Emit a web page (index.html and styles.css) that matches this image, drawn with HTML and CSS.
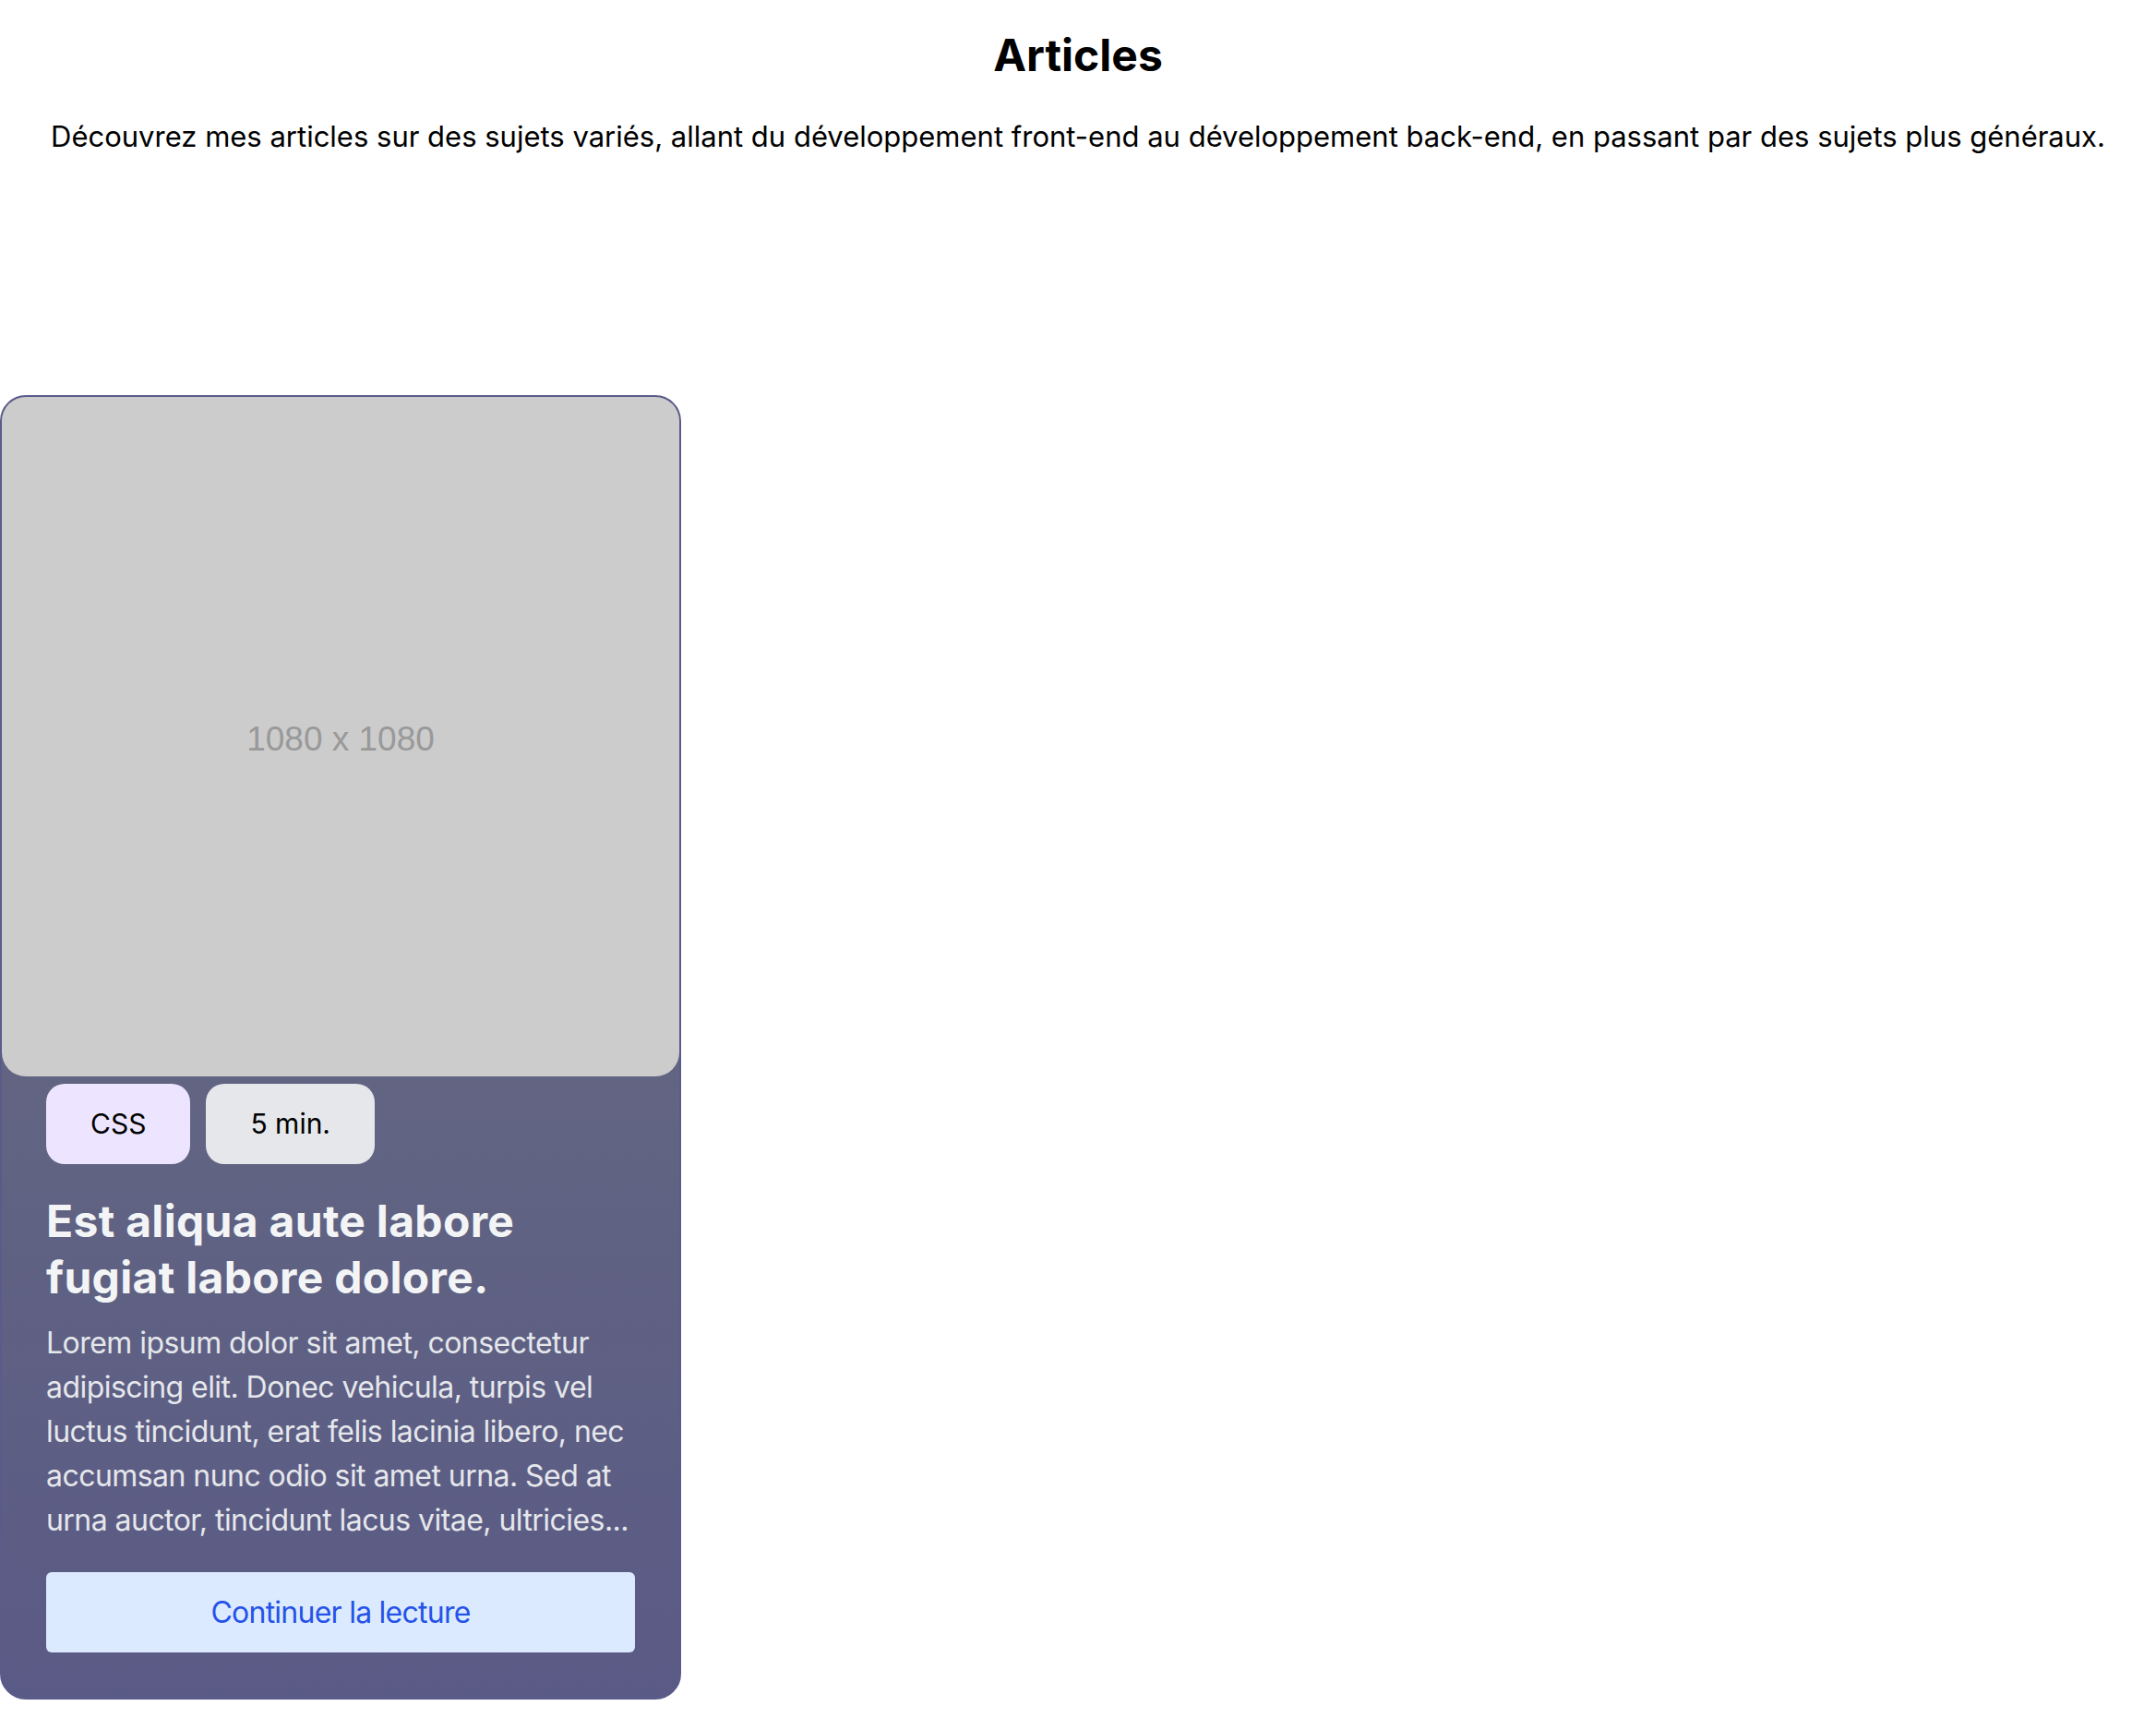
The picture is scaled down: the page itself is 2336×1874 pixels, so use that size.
FILE: index.html
```html
<!DOCTYPE html>
<html lang="fr">
<head>
<meta charset="utf-8">
<title>Articles</title>
<link rel="stylesheet" href="styles.css">
</head>
<body>
<header class="page-header">
  <h1 class="page-title">Articles</h1>
  <p class="page-intro">Découvrez mes articles sur des sujets variés, allant du développement front-end au développement back-end, en passant par des sujets plus généraux.</p>
</header>
<main class="articles">
  <article class="card">
    <div class="card-image"><span class="card-image-label">1080 x 1080</span></div>
    <div class="card-body">
      <div class="tags">
        <span class="tag tag-topic">CSS</span>
        <span class="tag tag-time">5 min.</span>
      </div>
      <h2 class="card-title">Est aliqua aute labore fugiat labore dolore.</h2>
      <p class="card-text">Lorem ipsum dolor sit amet, consectetur adipiscing elit. Donec vehicula, turpis vel luctus tincidunt, erat felis lacinia libero, nec accumsan nunc odio sit amet urna. Sed at urna auctor, tincidunt lacus vitae, ultricies...</p>
      <a class="card-button" href="#">Continuer la lecture</a>
    </div>
  </article>
</main>
</body>
</html>
```

FILE: styles.css
```css
* { box-sizing: border-box; }

body {
  margin: 0;
  background: #ffffff;
  font-family: Inter, "Noto Sans", sans-serif;
  color: #000000;
}

.page-header {
  text-align: center;
}

.page-title {
  margin: 31px 0 0;
  font-size: 48px;
  font-weight: 700;
  line-height: 58px;
}

.page-intro {
  margin: 40px 0 0;
  font-size: 31px;
  line-height: 38px;
}

.articles {
  display: flex;
  margin-top: 261px;
}

.card {
  width: 738px;
  border: 2px solid #5b5b8b;
  border-radius: 28px;
  overflow: hidden;
  background: linear-gradient(180deg, #6a707d 0%, #5a5a86 100%);
}

.card-image {
  height: 736px;
  padding-top: 6px;
  background: #cccccc;
  border-radius: 0 0 26px 26px;
  display: flex;
  align-items: center;
  justify-content: center;
}

.card-image-label {
  font-family: "Liberation Sans", Arial, sans-serif;
  font-size: 37px;
  color: #999999;
}

.card-body {
  padding: 8px 48px 49px;
}

.tags {
  display: flex;
  gap: 17px;
}

.tag {
  display: inline-block;
  padding: 21px 48px;
  border-radius: 20px;
  font-size: 30px;
  line-height: 45px;
  color: #000000;
}

.tag-topic { background: #ede5ff; }
.tag-time { background: #e5e7eb; }

.card-title {
  margin: 31px 0 0;
  font-size: 48px;
  line-height: 61px;
  letter-spacing: 0.3px;
  font-weight: 700;
  color: #f3f4f6;
}

.card-text {
  margin: 17px 0 0;
  font-size: 32px;
  line-height: 48px;
  letter-spacing: -0.55px;
  color: #e5e7eb;
}

.card-button {
  display: block;
  margin-top: 32px;
  padding: 19.5px 0;
  border-radius: 6px;
  background: #dbeafe;
  color: #2552e8;
  text-align: center;
  text-decoration: none;
  font-size: 32px;
  line-height: 48px;
  letter-spacing: -0.75px;
}
```
